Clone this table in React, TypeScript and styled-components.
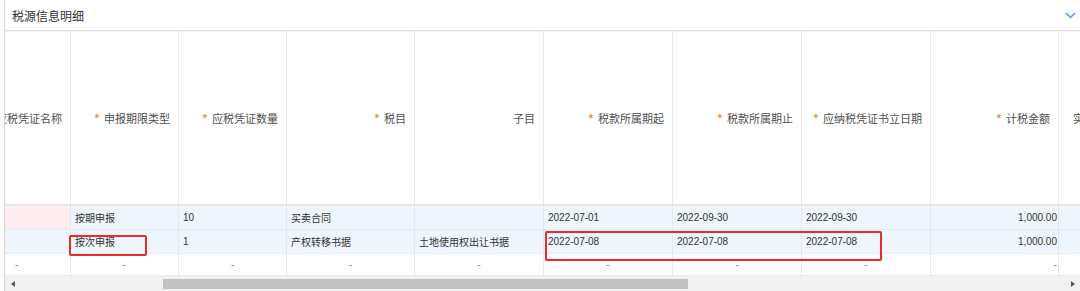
import React from "react";
import styled, { createGlobalStyle } from "styled-components";

const GlobalStyle = createGlobalStyle`
  html, body {
    margin: 0;
    padding: 0;
    background: #ffffff;
  }
  body {
    font-family: "Liberation Sans", "Noto Sans CJK SC", sans-serif;
    color: #333;
  }
`;

const COLUMNS = [108, 108, 108, 128, 129, 129, 129, 129, 128, 129];
const SCROLL_LEFT = 42;

const Page = styled.div`
  width: 1080px;
  height: 291px;
  padding-left: 4px;
  box-sizing: border-box;
  overflow: hidden;
`;

const Frame = styled.div`
  position: relative;
  height: 100%;
  border-left: 1px solid #d6d6d6;
  display: flex;
  flex-direction: column;
`;

const TitleBar = styled.div`
  height: 30px;
  flex: none;
  display: flex;
  align-items: center;
  justify-content: space-between;
  padding: 0 4px 0 7px;
  border-bottom: 1px solid #dedede;
  box-shadow: 0 1px 1px rgba(0, 0, 0, 0.04);
  font-size: 12px;
  color: #333;
`;

const Viewport = styled.div`
  flex: 1;
  overflow: hidden;
`;

const Grid = styled.div<{ $cols: number[] }>`
  display: grid;
  grid-template-columns: ${({ $cols }) => $cols.map((c) => `${c}px`).join(" ")};
  width: max-content;
`;

const HeadCell = styled.div<{ $align?: "start" | "end" }>`
  height: 175px;
  box-sizing: border-box;
  border-right: 1px solid #e8e8e8;
  border-bottom: 2px solid #e6e6e6;
  display: flex;
  align-items: center;
  justify-content: ${({ $align }) => ($align === "start" ? "flex-start" : "flex-end")};
  padding: ${({ $align }) => ($align === "start" ? "0 8px 0 14px" : "0 8px 0 4px")};
  overflow: hidden;
  white-space: nowrap;
  font-size: 11px;
  color: #4f4f4f;
`;

const Required = styled.span`
  color: #f5854a;
  font-size: 11px;
  font-weight: bold;
  margin-right: 5px;
`;

const Cell = styled.div<{ $h: number; $bg: string; $align: "left" | "right" | "center" }>`
  height: ${({ $h }) => $h}px;
  box-sizing: border-box;
  background: ${({ $bg }) => $bg};
  border-right: 1px solid #e2e8ef;
  border-bottom: 1px solid #e4ebf3;
  display: flex;
  align-items: center;
  justify-content: ${({ $align }) =>
    $align === "left" ? "flex-start" : $align === "right" ? "flex-end" : "center"};
  padding: ${({ $align }) => ($align === "right" ? "0 1px 0 4px" : "0 4px")};
  overflow: hidden;
  white-space: nowrap;
  font-size: 10px;
  color: #333;
`;

const Dash = styled.span`
  color: #7b8190;
  font-size: 10px;
`;

const Scrollbar = styled.div`
  height: 15px;
  flex: none;
  background: #f1f1f1;
  display: flex;
  align-items: center;
`;

const ArrowButton = styled.div`
  width: 15px;
  height: 15px;
  flex: none;
  display: flex;
  align-items: center;
  justify-content: center;
`;

const Track = styled.div`
  flex: 1;
  height: 100%;
  display: flex;
  align-items: center;
`;

const Thumb = styled.div`
  height: 10px;
  background: #c1c1c1;
  border-radius: 1px;
`;

const Mark = styled.div`
  position: absolute;
  border: 2px solid #ee2a24;
  border-radius: 2px;
  box-sizing: border-box;
  pointer-events: none;
`;

type Col = { label: string; required?: boolean; align?: "start" | "end"; body: "left" | "right" };

const columns: Col[] = [
  { label: "应税凭证名称", body: "left" },
  { label: "申报期限类型", required: true, body: "left" },
  { label: "应税凭证数量", required: true, body: "left" },
  { label: "税目", required: true, body: "left" },
  { label: "子目", body: "left" },
  { label: "税款所属期起", required: true, body: "left" },
  { label: "税款所属期止", required: true, body: "left" },
  { label: "应纳税凭证书立日期", required: true, body: "left" },
  { label: "计税金额", required: true, body: "right" },
  { label: "实缴金额", align: "start", body: "right" },
];

const rows: { bg: string; first: string; h: number; cells: string[] }[] = [
  {
    bg: "#eef5fd",
    first: "#fdedf1",
    h: 24,
    cells: ["", "按期申报", "10", "买卖合同", "", "2022-07-01", "2022-09-30", "2022-09-30", "1,000.00", ""],
  },
  {
    bg: "#eef5fd",
    first: "#eef5fd",
    h: 24,
    cells: ["", "按次申报", "1", "产权转移书据", "土地使用权出让书据", "2022-07-08", "2022-07-08", "2022-07-08", "1,000.00", ""],
  },
];

const Chevron = () => (
  <svg width="11" height="7" viewBox="0 0 11 7">
    <polyline points="1,1.2 5.5,5.5 10,1.2" fill="none" stroke="#5a9fe6" strokeWidth="1.6" />
  </svg>
);

const Triangle = ({ dir }: { dir: "left" | "right" }) => (
  <svg width="4" height="6" viewBox="0 0 4 6">
    <polygon points={dir === "left" ? "4,0 0,3 4,6" : "0,0 4,3 0,6"} fill="#555" />
  </svg>
);

const App: React.FC = () => {
  return (
    <Page>
      <GlobalStyle />
      <Frame>
        <TitleBar>
          <span>税源信息明细</span>
          <Chevron />
        </TitleBar>
        <Viewport>
          <Grid $cols={COLUMNS} style={{ marginLeft: -SCROLL_LEFT }}>
            {columns.map((c) => (
              <HeadCell key={c.label} $align={c.align}>
                {c.required && <Required>*</Required>}
                {c.label}
              </HeadCell>
            ))}
            {rows.map((r, ri) =>
              r.cells.map((v, ci) => (
                <Cell
                  key={`${ri}-${ci}`}
                  $h={r.h}
                  $bg={ci === 0 ? r.first : r.bg}
                  $align={columns[ci].body}
                >
                  {v}
                </Cell>
              ))
            )}
            {columns.map((c, ci) => (
              <Cell
                key={`dash-${ci}`}
                $h={22}
                $bg="#ffffff"
                $align={c.body === "right" ? "right" : "center"}
              >
                <Dash>-</Dash>
              </Cell>
            ))}
          </Grid>
        </Viewport>
        <Scrollbar>
          <ArrowButton>
            <Triangle dir="left" />
          </ArrowButton>
          <Track>
            <Thumb style={{ marginLeft: 143, width: 525 }} />
          </Track>
          <ArrowButton>
            <Triangle dir="right" />
          </ArrowButton>
        </Scrollbar>
        <Mark style={{ left: 64, top: 235, width: 78, height: 21 }} />
        <Mark style={{ left: 540, top: 231, width: 337, height: 30 }} />
      </Frame>
    </Page>
  );
};

export default App;
